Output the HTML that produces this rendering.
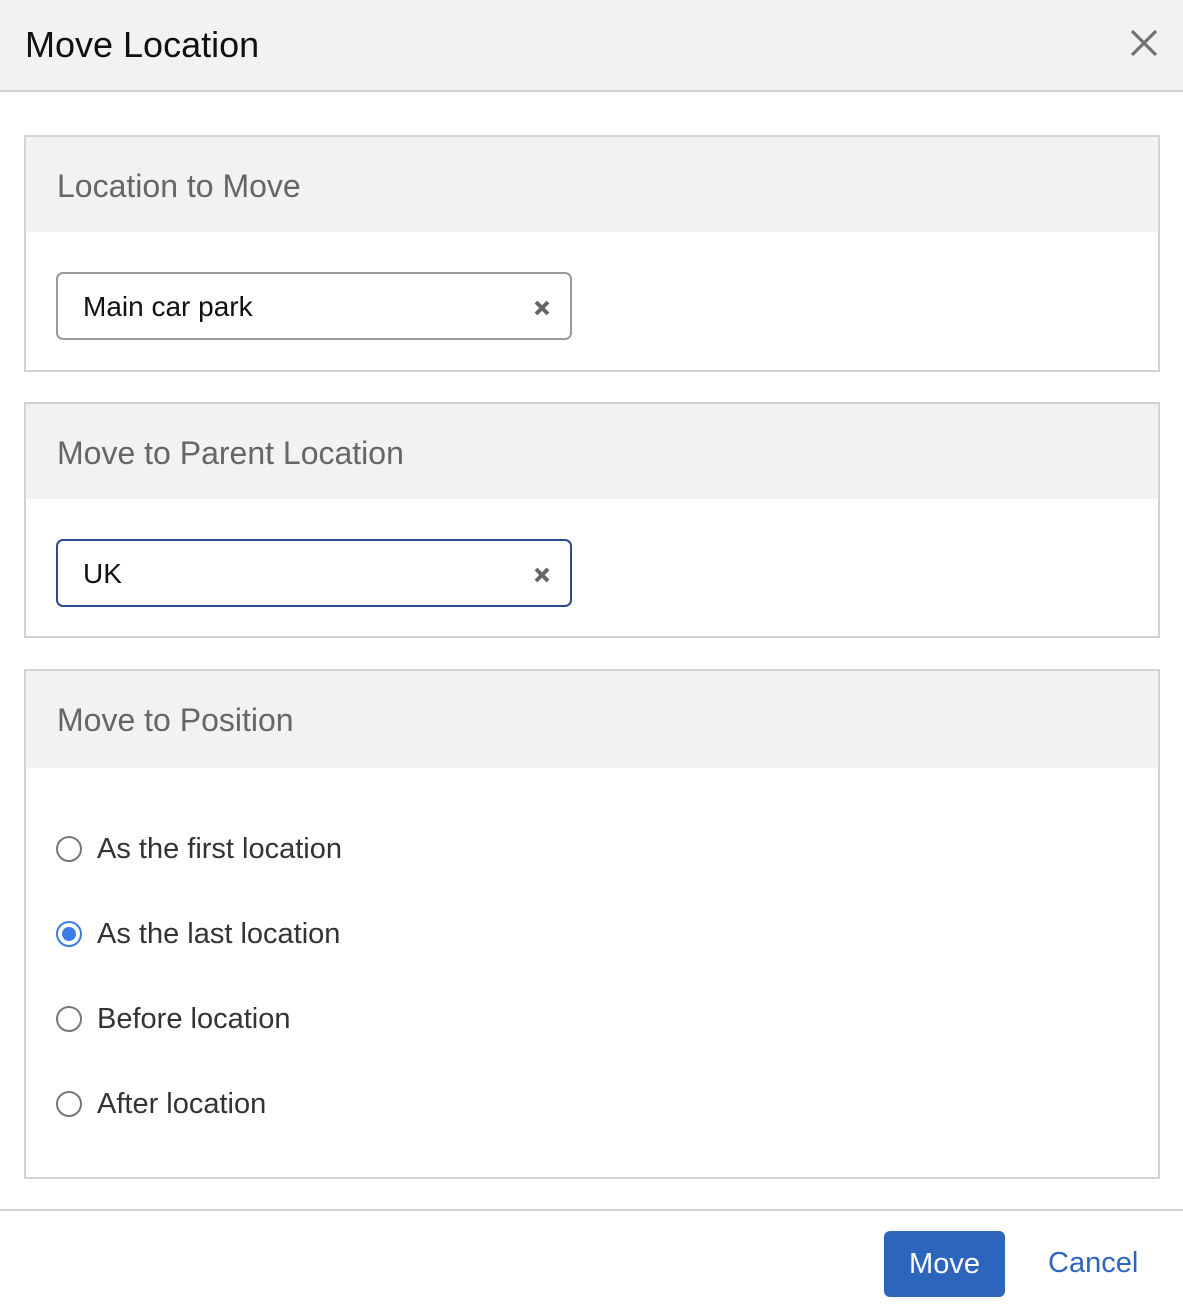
<!DOCTYPE html>
<html><head><style>
*{margin:0;padding:0;box-sizing:border-box}
body{width:1183px;height:1305px;background:#fff;font-family:"Liberation Sans",Arial,sans-serif;position:relative;overflow:hidden}
.a{position:absolute}
.hdr{left:0;top:0;width:1183px;height:92px;background:#f2f2f2;border-bottom:2px solid #d0d0d0}
.box{left:24px;width:1136px;border:2px solid #d3d3d3}
.bh{position:absolute;left:0;top:0;right:0;height:95px;background:#f2f2f2}
.bt{position:absolute;left:31px;top:31px;font-size:32px;color:#666}
.inp{left:56px;width:516px;height:68px;border:2px solid #9a9a9a;border-radius:7px}
.inp span{position:absolute;left:25px;top:17px;font-size:28px;color:#111}
.inp svg{position:absolute;right:19px;top:25px}
.r{left:56px;width:26px;height:26px;border:2px solid #777;border-radius:50%}
.l{left:97px;font-size:29px;color:#333}
</style></head><body>
<div class="a hdr"></div>
<div class="a" style="left:25px;top:24px;font-size:36px;color:#111">Move Location</div>
<svg class="a" style="left:1128px;top:27px" width="32" height="32"><path d="M4 4L28 28M28 4L4 28" stroke="#707070" stroke-width="3.2"/></svg>

<div class="a box" style="top:135px;height:237px"><div class="bh"></div><div class="bt">Location to Move</div></div>
<div class="a inp" style="top:272px"><span>Main car park</span><svg width="18" height="18"><path d="M3 3L15 15M15 3L3 15" stroke="#666" stroke-width="4"/></svg></div>

<div class="a box" style="top:402px;height:236px"><div class="bh"></div><div class="bt">Move to Parent Location</div></div>
<div class="a inp" style="top:539px;border-color:#2c4a8c"><span>UK</span><svg width="18" height="18"><path d="M3 3L15 15M15 3L3 15" stroke="#666" stroke-width="4"/></svg></div>

<div class="a box" style="top:669px;height:510px"><div class="bh" style="height:97px"></div><div class="bt">Move to Position</div></div>
<div class="a r" style="top:836px"></div>
<div class="a l" style="top:833px">As the first location</div>
<div class="a r" style="top:921px;border-color:#3b7be8"><div style="position:absolute;left:4px;top:4px;width:14px;height:14px;border-radius:50%;background:#3b7be8"></div></div>
<div class="a l" style="top:918px">As the last location</div>
<div class="a r" style="top:1006px"></div>
<div class="a l" style="top:1003px">Before location</div>
<div class="a r" style="top:1091px"></div>
<div class="a l" style="top:1088px">After location</div>

<div class="a" style="left:0;top:1209px;width:1183px;height:2px;background:#d0d0d0"></div>
<div class="a" style="left:884px;top:1231px;width:121px;height:66px;background:#2d65bd;border-radius:6px;color:#fff;font-size:29px;text-align:center;line-height:66px">Move</div>
<div class="a" style="left:1048px;top:1247px;font-size:29px;color:#2d65bd">Cancel</div>
</body></html>
